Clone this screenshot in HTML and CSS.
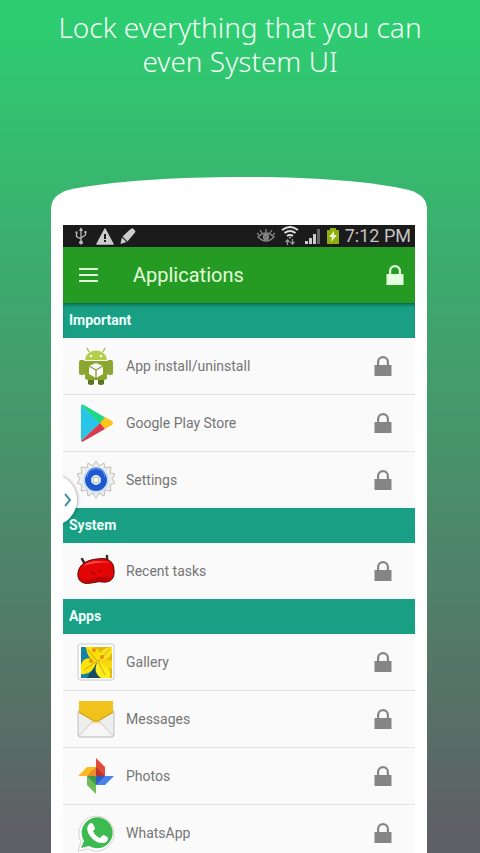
FILE: index.html
```html
<!DOCTYPE html>
<html lang="en">
	<head>
		<meta charset="UTF-8">
		<meta name="viewport" content="width=device-width, initial-scale=1.0">
		<title>Applications</title>
		<link rel="stylesheet" href="styles.css">
	</head>
	<body>
		<svg class="defs" width="0" height="0" aria-hidden="true">
			<symbol id="lock" viewBox="0 0 18 20">
				<path d="M0.500 9h2.500V6a6 6 0 0 1 12 0v3h2.500v11H.500z M5.200 9h7.600V6a3.800 3.800 0 0 0-7.600 0z" fill="currentColor" fill-rule="evenodd"/>
			</symbol>
		</svg>

		<h1 class="headline">Lock everything that you can even System UI</h1>

		<main class="phone">
			<svg class="phone-cap" viewBox="0 0 376 48" preserveAspectRatio="none" aria-hidden="true">
				<path d="M0 48V33C0 23 5 17 17 13C60 4 120 0 193 0C260 0 320 4 358 13C371 17 376 23 376 33V48z" fill="#fff"/>
			</svg>

			<div class="screen">
				<div class="statusbar">
					<svg width="14" height="18" viewBox="0 0 14 18" fill="none" stroke="#bbb" stroke-width="1.3">
						<path d="M7 3v12M2.500 6v3.500L7 12M11.500 5v3L7 11"/>
						<path d="M7 0l2 4H5zM5 15.500a2 2 0 1 1 4 0a2 2 0 1 1-4 0zM1.500 4.500h2v2h-2zM10.500 4h2v2h-2z" fill="#bbb" stroke="none"/>
					</svg>
					<svg class="warning" width="18" height="17" viewBox="0 0 18 17">
						<path d="M9 1L17 16H1z" fill="#ccc" stroke="#ccc" stroke-width="1.500" stroke-linejoin="round"/>
						<path d="M8 6h2v5H8zM8 12h2v2H8z" fill="#1b1b1b"/>
					</svg>
					<svg class="pencil" width="16" height="17" viewBox="0 0 16 17" fill="#ccc">
						<path d="M9.500 2L11.500 .5q1-.6 2 .4l1.500 1.500q.8 1 0 2L7.500 13.500 2.500 8.500zM1.800 9.500L6.500 14l-6 2z"/>
					</svg>
					<svg class="eye" width="18" height="16" viewBox="0 0 18 16" fill="none" stroke="#888" stroke-width="1.300">
						<path d="M1 9q8-8 16 0q-8 8-16 0z"/>
						<circle cx="9" cy="9" r="2.500" fill="#777"/>
						<path d="M9 4V1M5 5L3 2M13 5l2-3M2 7L0 5M16 7l2-2"/>
					</svg>
					<svg width="18" height="20" viewBox="0 0 18 20" fill="none" stroke="#ddd" stroke-width="2">
						<path d="M1 4q8-6 16 0M3.500 7q5.500-4 11 0M6 10q3-2 6 0"/>
						<path d="M8 11h2l-1 2z" fill="#ddd" stroke="none"/>
						<path d="M6.500 19v-5M4.500 16l2-2 2 2M11.500 13v5M9.500 16l2 2 2-2" stroke="#999" stroke-width="1.300"/>
					</svg>
					<svg width="16" height="16" viewBox="0 0 16 16">
						<path d="M0 13h3v3H0zM4 10h3v6H4zM8 6h3v10H8z" fill="#ccc"/>
						<path d="M12 1h3v15h-3z" fill="#666"/>
					</svg>
					<svg width="12" height="16" viewBox="0 0 12 16">
						<path d="M0 2h3V0h6v2h3v14H0z" fill="#8fae10"/>
						<path d="M7 3L2 9h3l-1 5 6-7H7z" fill="#f0f5d0"/>
					</svg>
					<span class="clock">7:12 PM</span>
				</div>

				<header class="toolbar">
					<button class="icon-button" type="button" aria-label="Menu">
						<svg width="20" height="14" viewBox="0 0 20 14"><path d="M0 0h19v2H0zM0 6h19v2H0zM0 12h19v2H0z" fill="currentColor"/></svg>
					</button>
					<h2 class="toolbar-title">Applications</h2>
					<button class="icon-button" type="button" aria-label="Lock all"><svg width="18" height="20"><use href="#lock"/></svg></button>
				</header>

				<section>
					<h3 class="section-title first">Important</h3>
					<ul class="app-list">
						<li class="app">
							<svg class="app-icon" viewBox="0 0 38 38">
								<path d="M12 5L10 1M26 5l2-4" stroke="#9cb93a" stroke-width="1.200"/>
								<path d="M8 13Q9 4 19 3.500Q29 4 30 13z" fill="#b5cc4c"/>
								<circle cx="14" cy="9" r="1.200" fill="#fff"/><circle cx="24" cy="9" r="1.200" fill="#fff"/>
								<rect x="2" y="13" width="6" height="15" rx="2" fill="#8ba633"/>
								<rect x="30" y="13" width="6" height="15" rx="2" fill="#8ba633"/>
								<path d="M11 29h6v8q-3 2-6 0zM21 29h6v8q-3 2-6 0z" fill="#5c7420"/>
								<path d="M8 14h22v16q0 3-3 3H11q-3 0-3-3z" fill="#89a62c"/>
								<path d="M19 16l7 3v8l-7 4-7-4v-8z" fill="#fff"/>
								<path d="M12 19l7 4 7-4M19 23v8" fill="none" stroke="#8a9b50" stroke-width="1.400"/>
							</svg>
							<span class="app-name">App install/uninstall</span>
							<button class="icon-button" type="button" aria-label="Lock App install/uninstall"><svg width="18" height="20"><use href="#lock"/></svg></button>
						</li>
						<li class="app">
							<svg class="app-icon" viewBox="0 0 38 38">
								<path d="M4 1v36l19-18z" fill="#27c5e8"/>
								<path d="M4 1q1-1 3 0l22 13-6 6z" fill="#20d887"/>
								<path d="M23 19l5-6 7 4q2 2 0 4l-7 4z" fill="#fbc51c"/>
								<path d="M4 37l19-18 5 6L7 37q-2 1-3 0z" fill="#d93b50"/>
							</svg>
							<span class="app-name">Google Play Store</span>
							<button class="icon-button" type="button" aria-label="Lock Google Play Store"><svg width="18" height="20"><use href="#lock"/></svg></button>
						</li>
						<li class="app">
							<svg class="app-icon" viewBox="0 0 38 38">
								<g fill="#eee" stroke="#c6bdb3">
									<path d="M19 0l3 5 5-3 1 5 6-1-1 6 5 1-3 5 3 4-5 2 1 6-6-1-1 6-5-3-3 5-3-5-5 3-1-6-6 1 1-6-5-2 3-4-3-5 5-1-1-6 6 1 1-5 5 3z" stroke-linejoin="round"/>
								</g>
								<circle cx="19" cy="19" r="13" fill="#c9e3fb"/>
								<circle cx="19" cy="19" r="8" fill="#e6edf5" stroke="#1f59d0" stroke-width="6"/>
								<path d="M10 16a9 9 0 0 1 18 0" fill="none" stroke="#4f83e4" stroke-width="1.500"/>
								<circle cx="19" cy="19" r="3" fill="#fff" stroke="#bbb"/>
							</svg>
							<span class="app-name">Settings</span>
							<button class="icon-button" type="button" aria-label="Lock Settings"><svg width="18" height="20"><use href="#lock"/></svg></button>
						</li>
					</ul>
				</section>

				<section>
					<h3 class="section-title">System</h3>
					<ul class="app-list">
						<li class="app">
							<svg class="app-icon" viewBox="0 0 38 38">
								<path d="M8 12L5 7M30 9V4" stroke="#333" stroke-width="2.500" stroke-linecap="round"/>
								<path d="M1 21C2 12 10 8 20 7C30 5 37 9 37 18C38 27 33 31 25 30C20 29 18 31 14 31C5 33 0 28 1 21z" fill="#e30505" stroke="#5c0606"/>
								<path d="M6 14q5-5 14-5t13 2q-6-1-13 0T6 14z" fill="#f5453d"/>
								<path d="M3 26q5 4 12 1t19-2q-3 5-10 4-5-1-10 1-7 1-11-4z" fill="#b80000"/>
								<path d="M14 20l4 2M24 18l-2 2" stroke="#8c0000"/>
							</svg>
							<span class="app-name">Recent tasks</span>
							<button class="icon-button" type="button" aria-label="Lock Recent tasks"><svg width="18" height="20"><use href="#lock"/></svg></button>
						</li>
					</ul>
				</section>

				<section>
					<h3 class="section-title">Apps</h3>
					<ul class="app-list">
						<li class="app">
							<svg class="app-icon" viewBox="0 0 38 38">
								<rect x="1" y="1" width="36" height="36" rx="2" fill="#fff" stroke="#c9c9c9"/>
								<path d="M4 4h31v31H4z" fill="#1681a5"/>
								<path d="M10 35l9-14 6 14z" fill="#164c60"/>
								<path d="M8 4h27v31h-3l-8-12-6-8z" fill="#e2b80b"/>
								<path d="M9 4q10-1 14 5t-3 11Q10 16 9 4z" fill="#f9df08"/>
								<path d="M20 18Q7 11 4 22v9q11 2 16-13z" fill="#fbe30c"/>
								<path d="M21 18q-6 11 3 17h9q2-11-12-17z" fill="#ffec20"/>
								<path d="M21 18q1-13 14-14v6q-4 8-14 8z" fill="#fce21a"/>
								<path d="M22 18q8-3 13 0v8q-8-1-13-8z" fill="#f6d80c"/>
								<path d="M20 18l-9-11M20 18L7 27M21 18l7 14M21 18L33 6" stroke="#d2a30c"/>
								<circle cx="17" cy="7" r="2" fill="#ef8b12"/><circle cx="14" cy="18" r="2" fill="#ef8b12"/><circle cx="25" cy="14" r="2" fill="#ef8b12"/>
							</svg>
							<span class="app-name">Gallery</span>
							<button class="icon-button" type="button" aria-label="Lock Gallery"><svg width="18" height="20"><use href="#lock"/></svg></button>
						</li>
						<li class="app">
							<svg class="app-icon" viewBox="0 0 38 38">
								<rect x="1" y="10" width="36" height="27" rx="2" fill="#eee" stroke="#bcbcbc"/>
								<path d="M2 36l13-14q4-4 8 0l13 14" fill="#f6f6f6" stroke="#d0cbbb"/>
								<path d="M14 24l5-5 5 5q-5-3-10 0z" fill="#f4df74"/>
								<path d="M2 1h34v12L23 20q-4 3-8 0L2 13z" fill="#f1c21b"/>
								<path d="M2 12l13 8q4 3 8 0l13-8" fill="none" stroke="#c79a14"/>
							</svg>
							<span class="app-name">Messages</span>
							<button class="icon-button" type="button" aria-label="Lock Messages"><svg width="18" height="20"><use href="#lock"/></svg></button>
						</li>
						<li class="app">
							<svg class="app-icon" viewBox="0 0 38 38">
								<path d="M19 1l9 9v9h-9z" fill="#e34b3b"/><path d="M19 10l9 9h-9z" fill="#b93630"/>
								<path d="M1 19l9-9h9v9z" fill="#fbb923"/><path d="M10 19l9-9v9z" fill="#ee8b28"/>
								<path d="M19 37l-9-9v-9h9z" fill="#6fbd58"/><path d="M19 28l-9-9h9z" fill="#3b9950"/>
								<path d="M37 19l-9 9h-9v-9z" fill="#4884ed"/><path d="M28 19l-9 9v-9z" fill="#2e5fc0"/>
							</svg>
							<span class="app-name">Photos</span>
							<button class="icon-button" type="button" aria-label="Lock Photos"><svg width="18" height="20"><use href="#lock"/></svg></button>
						</li>
						<li class="app">
							<svg class="app-icon" viewBox="0 0 38 38">
								<path d="M1 37l3-9A17.500 17.500 0 1 1 11 35z" fill="#fff" stroke="#d3d3d3"/>
								<path d="M4 34l3-7A15.500 15.500 0 1 1 12 32z" fill="#3dbb51"/>
								<path d="M12 10q2-2 4 0l2 4q0 2-2 3q2 5 7 7l3-3q4 1 5 3q0 4-4 5Q19 30 13 22Q8 15 12 10z" fill="#fff"/>
							</svg>
							<span class="app-name">WhatsApp</span>
							<button class="icon-button" type="button" aria-label="Lock WhatsApp"><svg width="18" height="20"><use href="#lock"/></svg></button>
						</li>
					</ul>
				</section>

				<button class="side-tab" type="button" aria-label="Open side panel">
					<svg width="8" height="14" viewBox="0 0 8 14"><path d="M1 1l5 6-5 6" fill="none" stroke="#4a90a8" stroke-width="2"/></svg>
				</button>
			</div>
		</main>
	</body>
</html>
```
FILE: styles.css
```css
* {
	box-sizing: border-box;
}

body {
	margin: 0;
	height: 100vh;
	overflow: hidden;
	font-family: Roboto, "Liberation Sans", sans-serif;
	background: linear-gradient(#2ecc71, #2ecc71 3%, #5e6065 97%);
}

h1, h2, h3, ul {
	margin: 0;
	padding: 0;
}

button {
	padding: 0;
	border: none;
	background: none;
	cursor: pointer;
}

svg {
	display: block;
	flex: none;
}

.defs {
	position: absolute;
}

.headline {
	padding: 10px 48px 0;
	height: 177px;
	font-family: "Noto Sans", "Open Sans", sans-serif;
	font-size: 28px;
	font-weight: 300;
	line-height: 34px;
	text-align: center;
	color: #f0fff5;
}

.phone {
	margin: 0 53px 0 51px;
}

.phone-cap {
	width: 100%;
	height: 48px;
}

.screen {
	position: relative;
	padding: 0 12px;
	background-color: #ffffff;
}

.statusbar {
	display: flex;
	align-items: center;
	gap: 6px;
	height: 22px;
	padding: 0 4px 0 11px;
	background-color: #1b1b1b;
}

.warning {
	margin-left: 2px;
}

.pencil {
	margin-right: auto;
}

.clock {
	font-size: 18px;
	line-height: 22px;
	color: #c4c4c4;
}

.toolbar {
	display: flex;
	align-items: center;
	height: 56px;
	padding: 0 11px 0 16px;
	background-color: #259b24;
	color: #e4ffde;
}

.toolbar .icon-button {
	color: #e4ffde;
}

.toolbar-title {
	flex: 1;
	padding-left: 34px;
	font-size: 20px;
	font-weight: 400;
}

.section-title {
	height: 35px;
	padding-left: 6px;
	font-size: 14px;
	font-weight: 700;
	line-height: 35px;
	color: #eefffb;
	background-color: #189f84;
}

.section-title.first {
	box-shadow: inset 0 3px 3px -1px rgba(0, 60, 30, 0.5);
}

.app-list {
	list-style: none;
	background-color: #fafafa;
}

.app {
	display: flex;
	align-items: center;
	gap: 11px;
	height: 56px;
	padding: 0 23px 0 14px;
}

.app + .app {
	height: 57px;
	border-top: 1px solid #e2e2e2;
}

.app-icon {
	width: 38px;
	height: 38px;
}

.app-name {
	flex: 1;
	font-size: 14px;
	color: #757575;
}

.app .icon-button {
	color: #858585;
}

/* pull-out handle over the left edge of the list */
.side-tab {
	position: absolute;
	top: 249px;
	left: 0;
	width: 26px;
	height: 52px;
	display: flex;
	align-items: center;
	justify-content: flex-end;
	padding-right: 5px;
	border-radius: 0 26px 26px 0;
	background-color: #ffffff;
	box-shadow: 1px 0 3px rgba(0, 0, 0, 0.3);
	clip-path: inset(0 -5px 0 12px);
}
```
